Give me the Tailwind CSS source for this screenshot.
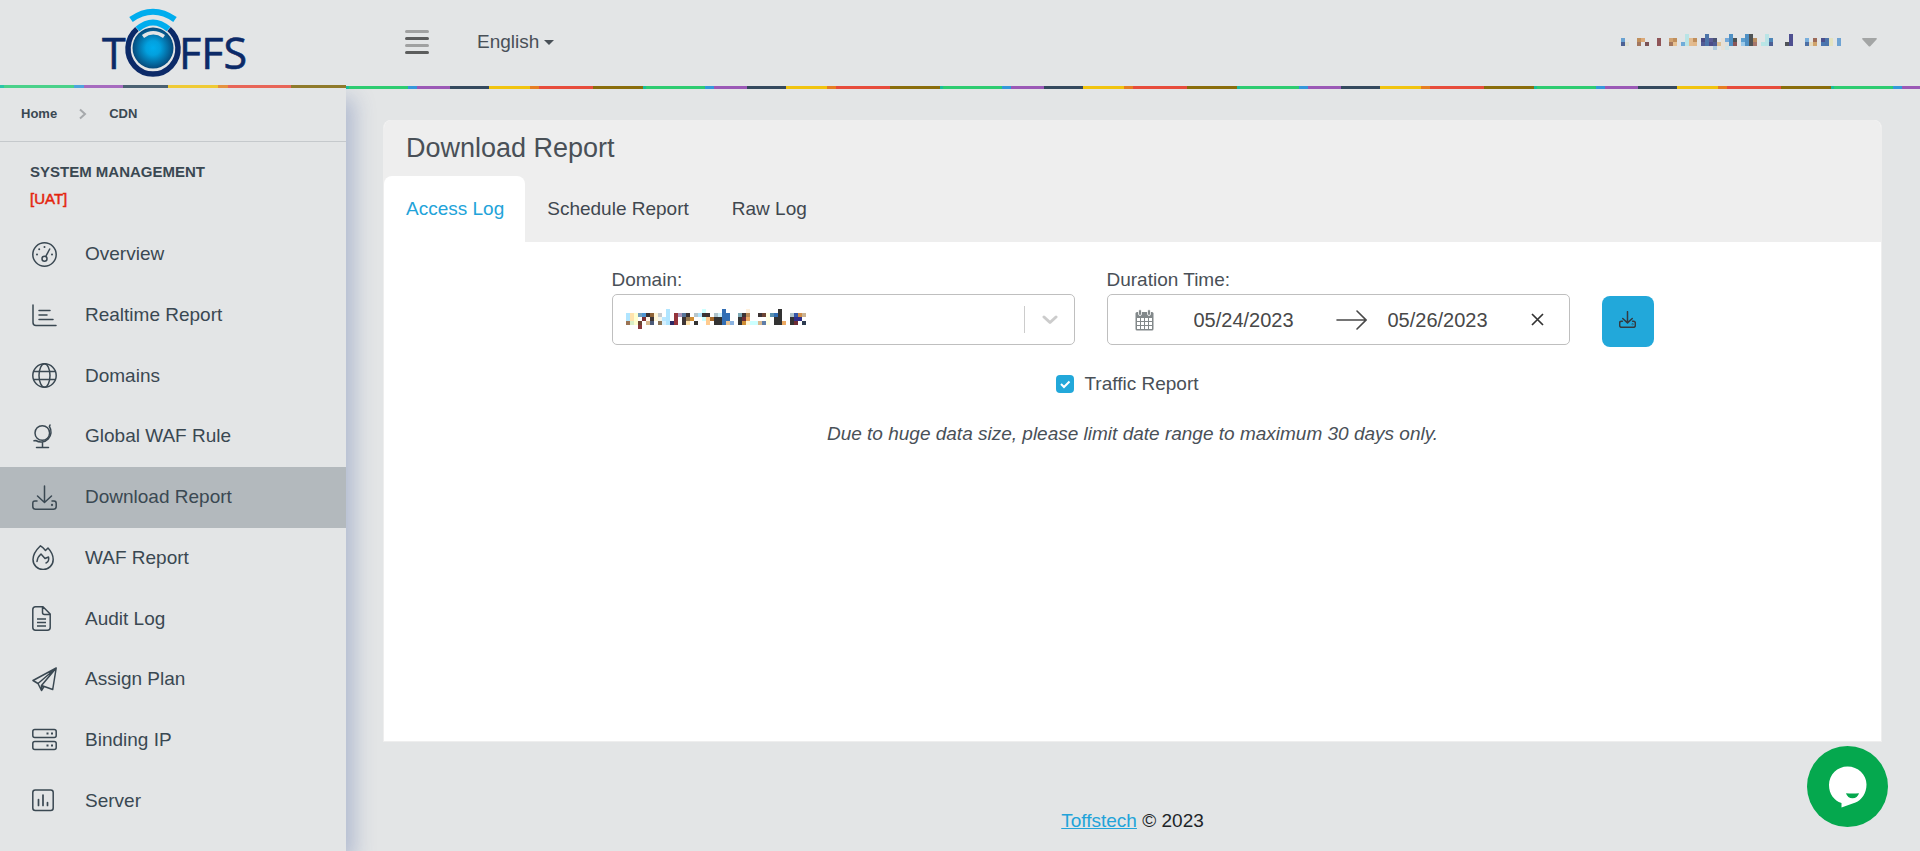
<!DOCTYPE html>
<html lang="en">
<head>
<meta charset="utf-8">
<meta name="viewport" content="width=device-width, initial-scale=1">
<title>Download Report</title>
<script src="https://cdn.jsdelivr.net/npm/@tailwindcss/browser@4"></script>
</head>
<body class="flex min-h-screen bg-[#e3e5e6] font-['Liberation_Sans',Arial,sans-serif] text-[19px] leading-7 text-[#495057]">

<aside class="flex w-[346px] shrink-0 flex-col">
  <a href="#" aria-label="TOFFS" class="relative z-20 flex h-[85px] items-center justify-center bg-[#e3e5e6]">
    <svg class="h-[85px] w-[346px]" viewBox="0 0 346 85" role="img" aria-label="TOFFS logo">
      <defs>
        <radialGradient id="orb"><stop offset="0" stop-color="#00adee"/><stop offset=".35" stop-color="#02a0de"/><stop offset="1" stop-color="#064a7c"/></radialGradient>
      </defs>
      <g fill="#0c2a68" stroke="#0c2a68" stroke-width=".6" font-family="Open Sans, sans-serif" font-size="43">
        <text x="102" y="69">T</text>
        <text x="179" y="69">FFS</text>
      </g>
      <ellipse cx="153" cy="49" rx="27" ry="26" fill="#e3e5e6"/>
      <path d="M137 29A25 25.500 0 1 0 169 29" fill="none" stroke="#0c2a68" stroke-width="5.500"/>
      <path d="M137.500 29Q153 16 168.500 29" fill="none" stroke="#00adee" stroke-width="6"/>
      <path d="M131 19.500Q153 4 175 19.500" fill="none" stroke="#00adee" stroke-width="6"/>
      <circle cx="153" cy="48" r="20.500" fill="url(#orb)"/>
      <path d="M143 36.500Q153 29 164 36.500" fill="none" stroke="#e3e5e6" stroke-width="3.500"/>
    </svg>
  </a>
  <div class="relative z-20 h-[3px] bg-[linear-gradient(to_right,#2bc5a9_0_4px,#4ad18a_4px_74px,#4ea4dd_74px_84px,#a66bbf_84px_123px,#4b6172_123px_168px,#efca35_168px_218px,#e5923f_218px_228px,#e86558_228px_291px,#8f7a2b_291px)]"></div>

  <div class="flex grow flex-col bg-[#e3e5e6] pb-5 shadow-[8px_10px_20px_rgba(45,75,150,0.28)]">
    <nav aria-label="Breadcrumb" class="flex h-[54px] items-center border-b border-[#c5c9cc] px-[21px] pb-0.5 text-[13px] font-bold text-[#3a4852]">
      <a href="#">Home</a>
      <svg class="mx-[22px] h-3 w-2" viewBox="0 0 8 12" fill="none" stroke="#a6a9ac" stroke-width="2"><path d="M1 1.500 6 6 1 10.500"/></svg>
      <a href="#">CDN</a>
    </nav>
    <h2 class="mt-4 px-[30px] text-[15px] leading-[27px] font-bold text-[#3a4852]">SYSTEM MANAGEMENT<br><span class="font-normal text-[#e3240c] [-webkit-text-stroke:0.5px_#e3240c]">[UAT]</span></h2>
    <nav aria-label="Main" class="mt-3 flex grow flex-col text-[#3a4852] [&_a]:flex [&_a]:min-h-12 [&_a]:flex-1 [&_a]:items-center [&_a]:gap-7 [&_a]:px-8 [&_svg]:size-[25px] [&_svg]:fill-none [&_svg]:stroke-current [&_svg]:stroke-[1.5]">
      <a href="#"><svg viewBox="0 0 25 25"><circle cx="12.500" cy="12.500" r="11.700"/><circle cx="12.500" cy="16.800" r="2.500"/><path d="M13.700 14.500 18 6.500"/><g fill="currentColor" stroke="none"><circle cx="12.500" cy="5" r="1"/><circle cx="7.200" cy="7.200" r="1"/><circle cx="5" cy="12.500" r="1"/><circle cx="20" cy="12.500" r="1"/></g></svg>Overview</a>
      <a href="#"><svg viewBox="0 0 25 25" stroke-linecap="round"><path d="M1 2v17.500q0 3 3 3h20M7 7.500h11M7 12h8M7 16.500h14"/></svg>Realtime Report</a>
      <a href="#"><svg viewBox="0 0 25 25"><circle cx="12.500" cy="12.500" r="11.700"/><ellipse cx="12.500" cy="12.500" rx="5.500" ry="11.700"/><path d="M1.500 8.500h22M1.500 16.500h22"/></svg>Domains</a>
      <a href="#"><svg viewBox="0 0 25 25" stroke-linecap="round"><circle cx="10.300" cy="9" r="7.300"/><path d="M18 1l-.6 1.500a10 10 0 0 1-13.600 14l-1.800.3M10.500 19v4.500M4.500 23.500h12"/></svg>Global WAF Rule</a>
      <a href="#" aria-current="page" class="bg-[#b3b9bd]"><svg viewBox="0 0 25 25" stroke-linecap="round" stroke-linejoin="round"><path d="M12.500 1v16M5.500 11l7 6.500 7-6.500M5 16H3q-2.200 0-2.200 2.500v3q0 2.700 2.700 2.700h18q2.700 0 2.700-2.700v-3q0-2.500-2.200-2.500h-2"/><circle cx="20" cy="20" r=".4"/></svg>Download Report</a>
      <a href="#"><svg viewBox="0 0 25 25" stroke-linejoin="round"><path d="M8.500.800Q1 8 1 14.500a10 10 0 0 0 20.200 0Q21.200 8.500 16 3l-2.500 2.500Q11.500 2.500 8.500.800Z"/><path d="M5 16.500Q5.500 12 9 9l4 4.500 3.500-1.500q1 4.500-2.500 6" stroke-linecap="round"/></svg>WAF Report</a>
      <a href="#"><svg viewBox="0 0 25 25" stroke-linejoin="round"><path d="M3.500.800h7.500l7.200 7.200v13.500q0 2.700-2.700 2.700h-12Q.800 24.200.800 21.500v-18Q.800.800 3.500.800ZM10.500 1v5.500q0 2 2 2H18M5 13h9M5 16.500h9M5 20h9"/></svg>Audit Log</a>
      <a href="#"><svg viewBox="0 0 25 25" stroke-linejoin="round"><path d="M24.200 1 1 13.500l5 3L24.200 1 9.500 18.500l11.200 4L24.200 1ZM6 16.500l3.500 7 2.500-4M9.500 23.500V18.500"/></svg>Assign Plan</a>
      <a href="#"><svg viewBox="0 0 25 25"><rect x=".8" y="2.500" width="23.400" height="8" rx="2"/><rect x=".8" y="14.500" width="23.400" height="8" rx="2"/><path d="M14.500 6.500h2M19 6.500h2M14.500 18.500h2M19 18.500h2" stroke-width="2"/></svg>Binding IP</a>
      <a href="#"><svg viewBox="0 0 25 25" stroke-linecap="round"><rect x=".8" y="2" width="20.400" height="20.500" rx="2.500"/><path d="M6.500 11.500v6M11 7v10.500M15.500 14.500v3" stroke-width="1.700"/></svg>Server</a>
    </nav>
  </div>
</aside>

<div class="flex min-w-0 grow flex-col">
  <header class="relative z-10 bg-[#e3e5e6]">
    <div class="flex h-[86px] items-center pr-[43px] pb-0.5 pl-[59px]">
      <button type="button" aria-label="Toggle menu" class="flex w-6 flex-col gap-1">
        <span class="h-[3px] w-full rounded-full bg-[#a0a1a1]"></span>
        <span class="h-[3px] w-full rounded-full bg-[#5c5d5d]"></span>
        <span class="h-[3px] w-full rounded-full bg-[#a0a1a1]"></span>
        <span class="h-[3px] w-full rounded-full bg-[#5c5d5d]"></span>
      </button>
      <button type="button" class="ml-12 flex items-center gap-[5px]">English
        <svg class="h-[5px] w-2.5" viewBox="0 0 10 5" fill="#495057"><path d="M0 0h10L5 5z"/></svg>
      </button>
      <button type="button" aria-label="Account" class="ml-auto flex items-center gap-[21px]">
        <svg id="user-mosaic" class="h-4 w-[220px]" viewBox="0 0 220 16" shape-rendering="crispEdges"></svg>
        <svg class="h-[9px] w-[15px]" viewBox="0 0 15 9" fill="#a3a5a5"><path d="M1 0h13q1.500 0 .5 1.500L8.500 8q-1 1.200-2 0L.500 1.500Q-.500 0 1 0z"/></svg>
      </button>
    </div>
    <div class="h-[3px] bg-[repeating-linear-gradient(to_right,#1abc9c_0_3px,#2ecc71_3px_62px,#3498db_62px_71px,#9b59b6_71px_104px,#34495e_104px_143px,#f1c40f_143px_184px,#e67e22_184px_193px,#e74c3c_193px_247px,#8a6d0b_247px_297px)]"></div>
  </header>

  <main class="flex grow flex-col pt-[31px] pr-[38px] pl-[37px]">
    <section class="flex grow flex-col overflow-hidden rounded-t-lg border-x border-b border-[#eee] bg-white">
      <div class="bg-[#eee]">
        <h1 class="px-[22px] py-2.5 text-[27px] leading-9">Download Report</h1>
        <div role="tablist" class="flex text-[#3f474f] [&_button]:h-[66px] [&_button]:rounded-t-lg [&_button]:pr-[21px] [&_button]:pl-[22px]">
          <button type="button" role="tab" aria-selected="true" class="bg-white text-[#22a3d9]">Access Log</button>
          <button type="button" role="tab" aria-selected="false">Schedule Report</button>
          <button type="button" role="tab" aria-selected="false">Raw Log</button>
        </div>
      </div>
      <form class="flex flex-col items-center px-6 pt-6">
        <div class="flex w-full max-w-[1042px] items-start gap-8">
          <div class="flex-1">
            <label for="domain" class="block">Domain:</label>
            <div class="relative">
              <select id="domain" class="block h-[51px] w-full appearance-none rounded-[5px] border border-[#bfbfbf] bg-white px-3"><option></option></select>
              <svg id="domain-mosaic" class="pointer-events-none absolute top-[15px] left-3.5 h-5 w-[180px]" viewBox="0 0 180 20" shape-rendering="crispEdges"></svg>
              <span class="pointer-events-none absolute inset-y-3 right-0 flex w-[51px] items-center justify-center border-l border-[#ccc]">
                <svg class="h-2.5 w-4" viewBox="0 0 16 10" fill="none" stroke="#ccc" stroke-width="3" stroke-linecap="round" stroke-linejoin="round"><path d="M2 2l6 5.500L14 2"/></svg>
              </span>
            </div>
          </div>
          <div class="flex-1">
            <label for="from" class="block">Duration Time:</label>
            <div class="flex h-[51px] items-center rounded-[5px] border border-[#bfbfbf] pr-[25px] pl-[27px] text-xl text-[#484848]">
              <svg class="h-[22px] w-[19px] shrink-0" viewBox="0 0 19 22"><rect x=".5" y="3" width="18" height="18.500" rx="1.500" fill="#82888a"/><path d="M2 9h3v3H2zM6 9h3v3H6zM10 9h3v3h-3zM14 9h3v3h-3zM2 13h3v3H2zM6 13h3v3H6zM10 13h3v3h-3zM14 13h3v3h-3zM2 17h3v3H2zM6 17h3v3H6zM10 17h3v3h-3zM14 17h3v3h-3z" fill="#fff"/><rect x="3.500" y=".5" width="3" height="6" rx="1.500" fill="#82888a" stroke="#fff" stroke-width=".8"/><rect x="12.500" y=".5" width="3" height="6" rx="1.500" fill="#82888a" stroke="#fff" stroke-width=".8"/></svg>
              <input id="from" type="text" value="05/24/2023" class="ml-10 w-[102px]">
              <svg class="mr-[21px] ml-auto h-[22px] w-[31px] shrink-0" viewBox="0 0 31 22" fill="none" stroke="#484848" stroke-width="1.600" stroke-linecap="round"><path d="M1 11h29M21 2l9 9-9 9"/></svg>
              <input type="text" aria-label="End date" value="05/26/2023" class="w-[102px]">
              <button type="button" aria-label="Clear dates" class="ml-[41px]"><svg class="size-[13px]" viewBox="0 0 13 13" stroke="#333" stroke-width="1.700"><path d="M1 1l11 11M12 1 1 12"/></svg></button>
            </div>
          </div>
          <button type="button" aria-label="Download" class="mt-[30px] flex h-[51px] w-[52px] items-center justify-center rounded-lg bg-[#22a8da] pb-1">
            <svg class="size-[17px]" viewBox="0 0 25 25" fill="none" stroke="#343a40" stroke-width="2.200" stroke-linecap="round" stroke-linejoin="round"><path d="M12.500 1v16M5.500 11l7 6.500 7-6.500M5 15H3.500q-2.500 0-2.500 2.500v4Q1 24 3.500 24h18q2.500 0 2.500-2.500v-4q0-2.500-2.500-2.500H20"/><circle cx="20" cy="19.500" r=".3"/></svg>
          </button>
        </div>
        <label class="mt-[23px] mr-2.5 flex items-center gap-2.5">
          <span class="relative block size-[18px]">
            <input type="checkbox" checked class="block size-[18px] appearance-none rounded-[4px] bg-[#22a8da]">
            <svg class="pointer-events-none absolute inset-0 size-[18px]" viewBox="0 0 18 18" fill="none" stroke="#fff" stroke-width="2"><path d="M5 9l3 3 5.500-5.500"/></svg>
          </span>
          Traffic Report
        </label>
        <p class="mt-[22px] italic">Due to huge data size, please limit date range to maximum 30 days only.</p>
      </form>
    </section>
    <footer class="pt-[65px] pb-4 text-center text-[#212529]"><a href="#" class="text-[#22a3d9] underline">Toffstech</a> © 2023</footer>
  </main>
</div>

<button type="button" aria-label="Open chat" class="fixed right-8 bottom-6 z-30 flex size-[81px] items-center justify-center rounded-full bg-[#05a84e]">
  <svg class="size-[81px]" viewBox="0 0 81 81"><path d="M40.500 20.500C51 20.500 59.500 28.500 59.500 38.500c0 9-5 15.500-11 18L34.500 61.500v-4.500C27 54.500 22 48 22 39 22 28.500 30.500 20.500 40.500 20.500z" fill="#fff"/><path d="M39 47.200q6.500.8 13 0-1.500 5-6.500 5T39 47.200z" fill="#05a84e"/></svg>
</button>

<script>
// Each entry is "column row height colour" on a 4px grid.
const mosaics = {
  'user-mosaic': '0 1 1 69a2d2,0 2 1 4d6294,1 2 1 dedfd0,4 1 1 c08f5c,4 2 1 a3775f,5 1 1 dba877,6 2 1 7b5355,9 1 2 8f5558,12 1 1 cfa272,12 2 1 a3775f,13 1 1 c08f5c,13 2 1 e6c193,15 2 1 71acd9,16 0 3 b9e4e6,17 1 2 e2bb90,18 1 1 c08f5c,18 2 1 e2b88a,20 1 1 4a4a82,20 2 1 525c96,21 0 3 4c74a9,22 1 1 5a5c96,22 2 1 4c4c88,23 1 1 4a5373,23 2 1 4f5c93,23 3 1 b0cbe0,24 2 1 dcbf92,25 1 3 e6e0d6,26 1 1 74a9da,26 2 1 dfe0dc,26 3 1 cfe4e6,27 0 3 4f90c4,28 1 1 4d5254,28 2 1 8a5557,30 1 1 5b9ed0,30 2 1 9ccaea,31 0 3 4f90c4,32 0 3 4f5355,33 1 1 b98d60,33 2 1 a6766b,35 2 1 b9e6e6,36 0 3 b9e4e6,37 1 1 4d85b8,37 2 1 4d5f94,41 2 1 505357,42 0 3 4e4f90,46 1 1 78aedc,46 2 1 4d6fa5,47 2 1 e4d9bd,48 1 1 9c6a58,48 2 1 d0a36c,50 1 1 4c4f8c,50 2 1 4b77b1,51 1 2 4c74ac,52 1 2 e4e3c0,54 1 2 6fa3d3',
  'domain-mosaic': '0 1 2 b0e5ff,0 3 1 9a7353,1 1 2 ffe3ad,1 3 1 d9f0c8,2 1 3 ffffcf,3 1 1 74a0bd,3 3 1 6b4433,3 4 1 8a3a3c,4 1 1 4f95d2,4 2 1 7b2f33,5 1 1 3c3334,5 3 1 d8b98f,6 1 1 8f6235,6 2 1 3c3334,6 3 1 4b5a78,5 2 1 fff6e9,7 1 2 fff6d9,8 1 1 c5c9cc,8 2 1 f4f4ea,8 3 1 8d7556,9 2 1 b8e6ff,9 3 1 d5f0ff,10 0 4 b0e5ff,11 3 1 2c2a66,12 1 3 94323a,13 1 1 ab93b8,14 1 1 56759a,14 2 2 3c3334,15 1 1 3c3334,15 2 1 94774f,15 3 1 ffe3ad,16 2 1 d08d33,17 1 1 b8c6cc,17 3 1 333333,18 1 1 b0e5ff,19 0 1 ccffff,19 1 1 3c3334,19 2 1 ccffff,20 1 1 3c3334,20 2 2 ffcb8f,21 2 1 a66a2b,22 1 1 b0c4cc,22 2 2 333333,23 1 1 cff0fa,23 2 2 333333,24 0 4 326eb4,25 1 2 326eb4,25 3 1 e8c495,26 3 1 8ab2e0,28 1 1 7fa9b5,28 2 2 333333,29 1 1 3c3334,29 2 1 6d2b33,29 3 1 cf8d33,30 0 1 fff0dc,30 1 1 b98a57,30 2 1 ecaa63,30 3 1 fff5d6,31 3 1 ccffff,32 3 1 ccffff,33 1 1 3c3334,33 3 1 d8b98f,34 1 1 6d4433,34 3 1 5f7ea8,35 1 3 ffffe5,36 1 1 568fb0,37 1 1 326eb4,37 2 2 333333,38 0 4 333333,39 3 1 ecaa63,41 1 1 b0c4cc,41 2 2 333333,42 1 1 3355a8,42 2 1 2f2f88,42 3 1 6d2b33,43 1 1 cf8d4a,43 2 1 2f2f88,44 1 1 c9b293,44 3 1 2d3c50'
};
for (const [id, data] of Object.entries(mosaics)) {
  document.getElementById(id).innerHTML = data.split(',').map(cell => {
    const [x, y, h, c] = cell.split(' ');
    return `<rect x="${x * 4}" y="${y * 4}" width="4" height="${h * 4}" fill="#${c}"/>`;
  }).join('');
}
</script>
</body>
</html>
